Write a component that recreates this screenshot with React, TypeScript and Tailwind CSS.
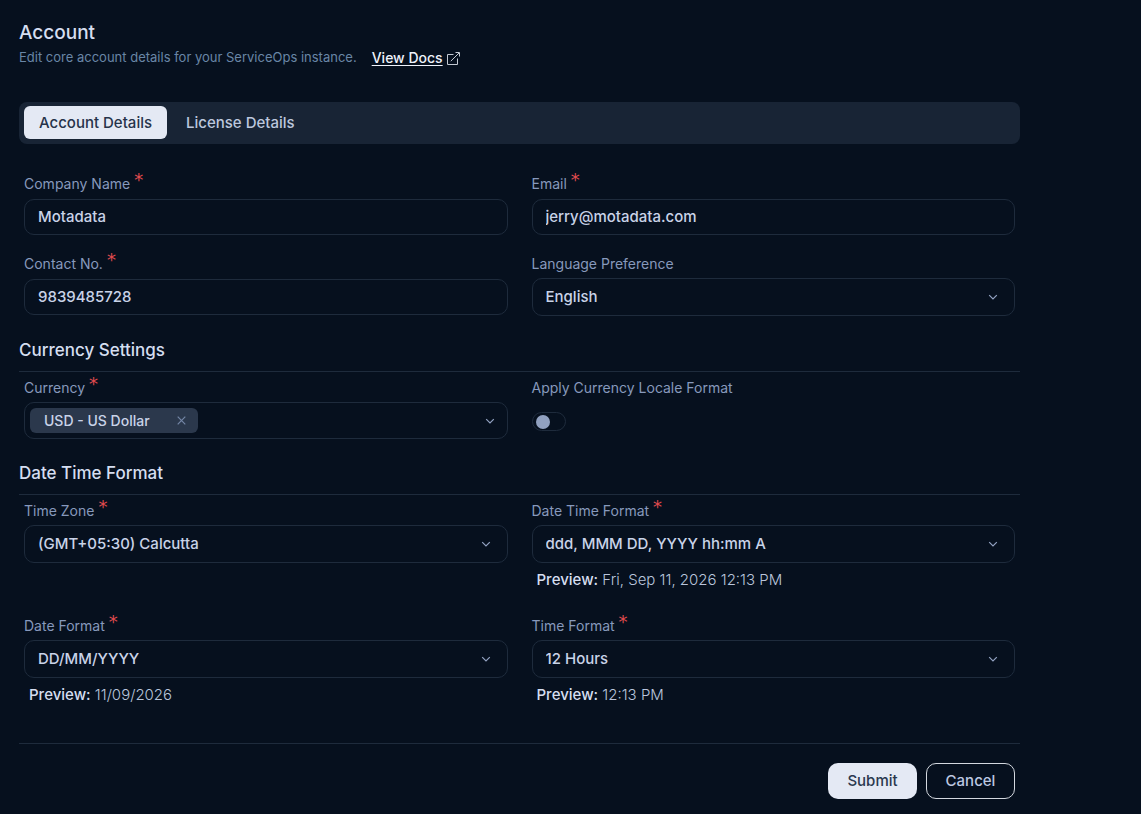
import { useId, useState, type ReactNode } from "react";

function Label({ htmlFor, children, required }: { htmlFor?: string; children: ReactNode; required?: boolean }) {
  return (
    <div className="flex h-6 items-center pb-1 text-sm leading-5 text-[#8799bc]">
      <label htmlFor={htmlFor}>{children}</label>
      {required && (
        <span className="ml-1 pb-2 font-['DejaVu_Sans',sans-serif] text-lg leading-5 text-[#e04b4e]">*</span>
      )}
    </div>
  );
}

function Chevron() {
  return (
    <svg viewBox="0 0 10 10" className="size-[10px]" fill="none" stroke="#93a3c2" strokeWidth="1.2">
      <path d="M1.2 3.2 5 7 8.8 3.2" />
    </svg>
  );
}

function TextField({ label, value, type = "text" }: { label: string; value: string; type?: string }) {
  const id = useId();
  return (
    <div>
      <Label htmlFor={id} required>
        {label}
      </Label>
      <input
        id={id}
        type={type}
        defaultValue={value}
        className="my-px block h-9 w-full rounded-[10px] border border-[#1e2b3c] bg-transparent px-[13px] pb-0.5 text-[15px] font-medium text-[#c9d3e8] outline-none"
      />
    </div>
  );
}

function SelectField({
  label,
  options,
  required,
  preview,
}: {
  label: string;
  options: string[];
  required?: boolean;
  preview?: string;
}) {
  const id = useId();
  return (
    <div>
      <Label htmlFor={id} required={required}>
        {label}
      </Label>
      <div className="relative">
        <select
          id={id}
          className="block h-[38px] w-full appearance-none rounded-[10px] border border-[#1e2b3c] bg-[#06101e] px-[13px] text-[15px] font-medium text-[#c9d3e8] outline-none"
        >
          {options.map((o) => (
            <option key={o}>{o}</option>
          ))}
        </select>
        <span className="pointer-events-none absolute inset-y-0 right-[17px] flex items-center">
          <Chevron />
        </span>
      </div>
      {preview && (
        <p className="mt-[7px] pl-[5px] text-[15px] leading-5 font-light text-[#b9c5dc]">
          <span className="font-medium text-[#d5def0]">Preview:</span> {preview}
        </p>
      )}
    </div>
  );
}

function SectionTitle({ children }: { children: ReactNode }) {
  return (
    <h2 className="mt-[22px] mb-1.5 border-b border-[#1e2b3c] pb-[9px] text-[17px] leading-6 font-medium text-[#d5def0]">
      {children}
    </h2>
  );
}

export default function App() {
  const [tab, setTab] = useState(0);
  return (
    <div className="min-h-screen bg-[#06101e] pt-[21px] pr-[121px] pb-[15px] pl-[19px] font-[Inter,sans-serif]">
      <header>
        <h1 className="text-[19px] leading-6 font-medium text-[#d5def0]">Account</h1>
        <div className="mt-[3px] flex h-5 items-center text-[13px] text-[#6986a6]">
          <p>Edit core account details for your ServiceOps instance.</p>
          <a href="#docs" className="ml-[15px] flex items-center gap-1 text-sm font-medium text-[#eef2fb]">
            <span className="underline underline-offset-2">View Docs</span>
            <svg viewBox="0 0 13 13" className="size-[13px]" fill="none" stroke="#c3c9d2" strokeWidth="1">
              <path d="M6.5 2.5h-6v10h10v-6M3.8 9.2 12 1M8.5.5h4v4" />
            </svg>
          </a>
        </div>
      </header>

      <div role="tablist" className="mt-[34px] flex h-[42px] items-center gap-1 rounded-lg bg-[#182435] px-[5px] pb-px">
        {["Account Details", "License Details"].map((t, i) => (
          <button
            key={t}
            type="button"
            role="tab"
            aria-selected={tab === i}
            onClick={() => setTab(i)}
            className={
              tab === i
                ? "h-[33px] rounded-md bg-[#e4e9f4] px-[15px] pt-0.5 text-[15px] font-medium text-[#26334a]"
                : "h-[33px] rounded-md px-[15px] pt-0.5 text-[15px] font-medium text-[#bcc7dd]"
            }
          >
            {t}
          </button>
        ))}
      </div>

      <form className="mt-[30px]" onSubmit={(e) => e.preventDefault()}>
        <div className="grid grid-cols-2 gap-x-6 gap-y-[18px] px-[5px]">
          <TextField label="Company Name" value="Motadata" />
          <TextField label="Email" value="jerry@motadata.com" type="email" />
          <TextField label="Contact No." value="9839485728" type="tel" />
          <SelectField label="Language Preference" options={["English"]} />
        </div>

        <SectionTitle>Currency Settings</SectionTitle>
        <div className="grid grid-cols-2 gap-x-6 px-[5px]">
          <div>
            <Label htmlFor="currency" required>
              Currency
            </Label>
            <div className="flex h-[37px] items-center justify-between rounded-[10px] border border-[#1e2b3c] pr-3 pl-[5px]">
              <span className="flex h-[25px] items-center gap-[27px] rounded-md bg-[#2b384c] pr-3 pl-[14px] text-sm font-medium text-[#c9d3e8]">
                USD - US Dollar
                <button type="button" aria-label="Remove USD - US Dollar" className="text-[#7486a6]">
                  <svg viewBox="0 0 9 9" className="size-[9px]" fill="none" stroke="currentColor" strokeWidth="1.2">
                    <path d="m.7.7 7.6 7.6M8.3.7.7 8.3" />
                  </svg>
                </button>
              </span>
              <button id="currency" type="button" aria-label="Currency">
                <Chevron />
              </button>
            </div>
          </div>
          <div>
            <Label htmlFor="locale">Apply Currency Locale Format</Label>
            <input
              id="locale"
              type="checkbox"
              role="switch"
              className="mt-[10px] flex h-[19px] w-[34px] appearance-none items-center rounded-full border border-[#1e2b3c] px-[3px] before:size-[14px] before:rounded-full before:bg-[#91a1c0] checked:justify-end"
            />
          </div>
        </div>

        <SectionTitle>Date Time Format</SectionTitle>
        <div className="grid grid-cols-2 gap-x-6 gap-y-[26px] px-[5px]">
          <SelectField label="Time Zone" options={["(GMT+05:30) Calcutta"]} required />
          <SelectField
            label="Date Time Format"
            options={["ddd, MMM DD, YYYY hh:mm A"]}
            required
            preview="Fri, Sep 11, 2026 12:13 PM"
          />
          <SelectField label="Date Format" options={["DD/MM/YYYY"]} required preview="11/09/2026" />
          <SelectField label="Time Format" options={["12 Hours"]} required preview="12:13 PM" />
        </div>

        <div className="mt-[38px] flex justify-end gap-[9px] border-t border-[#1e2b3c] pt-[19px] pr-[5px] text-[15px] font-medium">
          <button type="submit" className="h-9 w-[89px] rounded-[10px] bg-[#e4e9f4] text-[#2a384e]">
            Submit
          </button>
          <button type="button" className="h-9 w-[89px] rounded-[10px] border border-[#d3d8df] text-[#bcc8e1]">
            Cancel
          </button>
        </div>
      </form>
    </div>
  );
}
